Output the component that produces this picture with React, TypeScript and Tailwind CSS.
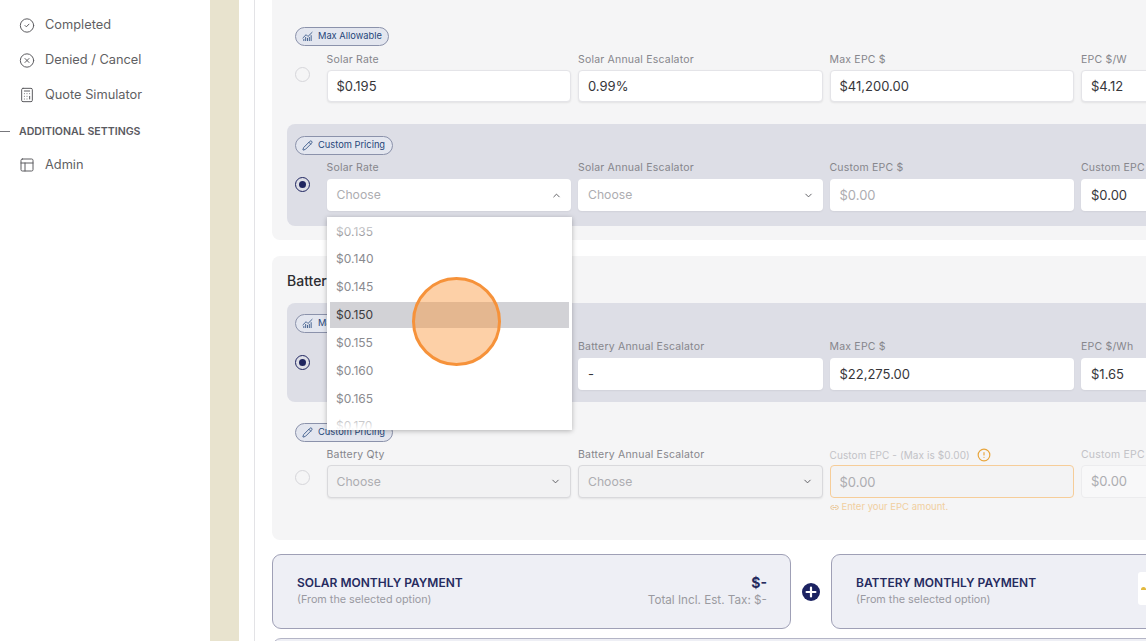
import React from "react";
import {
  CircleCheck,
  CircleX,
  Calculator,
  PanelsTopLeft,
  Pencil,
  ChartNoAxesCombined,
  ChevronDown,
  ChevronUp,
  CircleAlert,
  Link2,
} from "lucide-react";

const FONT = "font-['Inter','Noto_Sans',sans-serif]";

function NavItem({ icon, label }: { icon: React.ReactNode; label: string }) {
  return (
    <div className="flex h-[35px] items-center gap-[10px] pl-[19px] text-[12.8px] text-[#5f5f63]">
      <span className="flex w-[16px] justify-center text-[#5c5c60]">{icon}</span>
      <span>{label}</span>
    </div>
  );
}

function Badge({ kind }: { kind: "max" | "custom" }) {
  return (
    <div
      className={
        "flex h-[19px] items-center gap-[5px] rounded-full border border-[#8b92ab] bg-[#e3e6ef] pb-[1px] pl-[6px] text-[9.3px] text-[#27477a] " +
        (kind === "max" ? "w-[94px]" : "w-[98px]")
      }
    >
      {kind === "max" ? (
        <ChartNoAxesCombined size={11} strokeWidth={2} className="text-[#3b5a8a]" />
      ) : (
        <Pencil size={11} strokeWidth={2} className="text-[#3b5a8a]" />
      )}
      <span>{kind === "max" ? "Max Allowable" : "Custom Pricing"}</span>
    </div>
  );
}

function Radio({ on, className }: { on?: boolean; className: string }) {
  return (
    <div
      className={
        "flex h-[15px] w-[15px] shrink-0 items-center justify-center rounded-full border bg-transparent " +
        (on ? "border-[1.5px] border-[#1f2560] " : "border-[#d6d6da] ") +
        className
      }
    >
      {on && <div className="h-[7px] w-[7px] rounded-full bg-[#1f2560]" />}
    </div>
  );
}

type FieldProps = {
  label: React.ReactNode;
  value: string;
  placeholder?: boolean;
  select?: "up" | "down";
  variant?: "plain" | "borderless" | "disabled" | "warn" | "faint";
  labelClass?: string;
  inputClass?: string;
  children?: React.ReactNode;
};

function Field({
  label,
  value,
  placeholder,
  select,
  variant = "plain",
  labelClass = "mb-[6px] text-[#86868c]",
  inputClass = "h-[32px]",
  children,
}: FieldProps) {
  const box =
    variant === "plain"
      ? "border border-[#e4e4e8] bg-white pl-[9px] shadow-[0_1px_2px_rgba(0,0,0,0.08)]"
      : variant === "borderless"
        ? "bg-white pl-[10px] shadow-[0_1px_2px_rgba(0,0,0,0.06)]"
        : variant === "disabled"
          ? "border border-[#d9d9dc] bg-[#f2f2f3] pl-[9px] shadow-[0_1px_2px_rgba(0,0,0,0.08)]"
          : variant === "warn"
            ? "border border-[#f6cd99] bg-[#f3f3f4] pl-[9px]"
            : "border border-[#ececee] bg-[#f8f8f9] pl-[9px]";
  return (
    <div className="relative w-[244.5px] shrink-0">
      <div
        className={
          "h-[12px] whitespace-nowrap text-[10.5px] leading-[14px] tracking-[0.2px] " + labelClass
        }
      >
        {label}
      </div>
      <div
        className={
          "flex items-center justify-between rounded-[4px] pr-[9px] " +
          box +
          " " +
          inputClass +
          " " +
          (select ? "text-[12.2px] " : "text-[13px] ") +
          (placeholder ? "text-[#adadb1]" : "text-[#36363a]")
        }
      >
        <span className={variant === "plain" || variant === "warn" ? "pt-[2px]" : "pt-[1px]"}>{value}</span>
        {select === "up" && <ChevronUp size={11} className="text-[#55555a]" />}
        {select === "down" && <ChevronDown size={11} className="text-[#55555a]" />}
      </div>
      {children}
    </div>
  );
}

const OPTIONS = ["$0.135", "$0.140", "$0.145", "$0.150", "$0.155", "$0.160", "$0.165", "$0.170"];

function Menu() {
  return (
    <div className="absolute left-[0.5px] top-[56px] z-20 h-[213px] w-[244.5px] overflow-hidden bg-white px-[3px] pt-[1.5px] shadow-[0_1px_5px_rgba(0,0,0,0.28)]">
      <div className="flex flex-col gap-[1.85px]">
        {OPTIONS.map((o, i) => (
          <div
            key={o}
            className={
              "flex h-[26px] shrink-0 items-center pl-[6px] text-[12px] " +
              (i === 3 ? "bg-[#d2d2d6] text-[#3c3c40]" : "text-[#8a8a8f]")
            }
          >
            {o}
          </div>
        ))}
      </div>
      <div className="absolute inset-x-0 top-0 h-[22px] bg-gradient-to-b from-white to-transparent" />
      <div className="absolute inset-x-0 bottom-0 h-[18px] bg-gradient-to-t from-white to-transparent" />
    </div>
  );
}

function PayCard({
  title,
  width,
  right,
}: {
  title: string;
  width: string;
  right: React.ReactNode;
}) {
  return (
    <div
      className={
        "flex h-[75px] shrink-0 items-center justify-between rounded-[9px] border border-[#9fa0b6] bg-[#eeeff5] pl-[24px] pr-[23px] " +
        width
      }
    >
      <div>
        <div className="text-[12px] font-semibold leading-[16.5px] text-[#262b5f]">{title}</div>
        <div className="text-[10.8px] leading-[16.5px] text-[#9a9aa2]">(From the selected option)</div>
      </div>
      {right}
    </div>
  );
}

export default function App() {
  return (
    <div className={"relative flex h-[641px] w-[1146px] overflow-hidden bg-white " + FONT}>
      <aside className="w-[210px] shrink-0 bg-white pt-[7.5px]">
        <NavItem icon={<CircleCheck size={19} strokeWidth={1.5} />} label="Completed" />
        <NavItem icon={<CircleX size={19} strokeWidth={1.5} />} label="Denied / Cancel" />
        <NavItem icon={<Calculator size={20} strokeWidth={1.5} />} label="Quote Simulator" />
        <div className="mb-[-1.5px] mt-[2px] flex h-[34px] items-center text-[10.6px] font-semibold text-[#5a5a5f]">
          <div className="mr-[9px] h-[1px] w-[10px] bg-[#77777c]" />
          ADDITIONAL SETTINGS
        </div>
        <NavItem icon={<PanelsTopLeft size={20} strokeWidth={1.5} />} label="Admin" />
      </aside>
      <div className="w-[29px] shrink-0 bg-[#e8e3ce]" />
      <main className="min-w-0 flex-1 overflow-hidden">
        <div className="ml-[15px] flex h-full w-[1100px] flex-col border-l border-[#e3e3e6] pl-[17px]">
          {/* Solar options */}
          <section className="-mt-[20px] rounded-b-[8px] bg-[#f5f5f6] px-[15px] pb-[14px] pt-[35px]">
            <div className="px-[8px] pb-[15px] pt-[12px]">
              <Badge kind="max" />
              <div className="mt-[7px] flex">
                <Radio className="mt-[14px]" />
                <div className="ml-[16.5px] flex gap-[7px]">
                  <Field label="Solar Rate" value="$0.195" labelClass="mb-[5px] text-[#86868c]" />
                  <Field label="Solar Annual Escalator" value="0.99%" labelClass="mb-[5px] text-[#86868c]" />
                  <Field label="Max EPC $" value="$41,200.00" labelClass="mb-[5px] text-[#86868c]" />
                  <Field label="EPC $/W" value="$4.12" labelClass="mb-[5px] text-[#86868c]" />
                </div>
              </div>
            </div>
            <div className="mt-[7px] rounded-[8px] bg-[#dddee6] px-[8px] pb-[15px] pt-[12px]">
              <Badge kind="custom" />
              <div className="mt-[6px] flex">
                <Radio on className="mt-[16px]" />
                <div className="ml-[16.5px] flex gap-[7px]">
                  <Field label="Solar Rate" value="Choose" placeholder select="up" variant="borderless">
                    <Menu />
                  </Field>
                  <Field label="Solar Annual Escalator" value="Choose" placeholder select="down" variant="borderless" />
                  <Field label="Custom EPC $" value="$0.00" placeholder variant="borderless" />
                  <Field label="Custom EPC $/W" value="$0.00" variant="borderless" />
                </div>
              </div>
            </div>
          </section>

          {/* Battery options */}
          <section className="mt-[16px] h-[284px] shrink-0 rounded-[8px] bg-[#f5f5f6] px-[15px] pt-[16px]">
            <div className="h-[18px] text-[14px] font-medium leading-[18px] text-[#2c2c30]">Battery</div>
            <div className="mt-[13px] rounded-[8px] bg-[#dddee6] px-[8px] pb-[12px] pt-[11px]">
              <Badge kind="max" />
              <div className="mt-[7px] flex">
                <Radio on className="mt-[14.5px]" />
                <div className="ml-[16.5px] flex gap-[7px]">
                  <Field label="" value="" variant="borderless" />
                  <Field label="Battery Annual Escalator" value="-" variant="borderless" />
                  <Field label="Max EPC $" value="$22,275.00" variant="borderless" />
                  <Field label="EPC $/Wh" value="$1.65" variant="borderless" />
                </div>
              </div>
            </div>
            <div className="mt-[21px] px-[8px]">
              <Badge kind="custom" />
              <div className="mt-[6px] flex">
                <Radio className="mt-[21.5px]" />
                <div className="ml-[16.5px] flex gap-[7px]">
                  <Field label="Battery Qty" value="Choose" placeholder select="down" variant="disabled" labelClass="mb-[5px] text-[#86868c]" inputClass="h-[33px]" />
                  <Field label="Battery Annual Escalator" value="Choose" placeholder select="down" variant="disabled" labelClass="mb-[5px] text-[#86868c]" inputClass="h-[33px]" />
                  <Field
                    label={
                      <span className="flex items-center gap-[7px] text-[10px] tracking-[0.1px]">
                        Custom EPC - (Max is $0.00)
                        <CircleAlert size={14} className="text-[#e8a53c]" />
                      </span>
                    }
                    value="$0.00"
                    placeholder
                    variant="warn"
                    labelClass="mb-[5px] text-[#c2c2c6]"
                    inputClass="h-[33px]"
                  >
                    <div className="mt-[4px] flex items-center gap-[3px] text-[9.5px] leading-[10px] text-[#f1cfa0]">
                      <Link2 size={9} className="text-[#e6b677]" />
                      Enter your EPC amount.
                    </div>
                  </Field>
                  <Field label="Custom EPC $/Wh" value="$0.00" placeholder variant="faint" labelClass="mb-[5px] text-[#c2c2c6]" inputClass="h-[33px]" />
                </div>
              </div>
            </div>
          </section>

          {/* Payment cards */}
          <div className="mt-[14px] flex shrink-0 items-center">
            <PayCard
              title="SOLAR MONTHLY PAYMENT"
              width="w-[519px]"
              right={
                <div className="text-right">
                  <div className="text-[14px] font-bold leading-[18px] text-[#262b5f]">$-</div>
                  <div className="text-[11.7px] leading-[17px] text-[#9a9aa0]">Total Incl. Est. Tax: $-</div>
                </div>
              }
            />
            <div className="flex w-[40px] shrink-0 justify-center">
              <svg width="18" height="18" viewBox="0 0 18 18">
                <circle cx="9" cy="9" r="9" fill="#1c2362" />
                <path d="M9 4.6v8.8M4.6 9h8.8" stroke="#fff" strokeWidth="2.2" strokeLinecap="round" />
              </svg>
            </div>
            <PayCard title="BATTERY MONTHLY PAYMENT" width="w-[500px]" right={<div />} />
          </div>
          <div className="mt-[9px] h-[40px] w-[1000px] shrink-0 rounded-t-[9px] border border-[#b4b5c6] bg-[#eeeff5]" />
        </div>
      </main>

      {/* Small tool chip at the battery card's right edge */}
      <div className="absolute left-[1138px] top-[572px] flex h-[33px] w-[20px] items-center rounded-[3px] bg-white pl-[3px]">
        <div className="h-[3px] w-[5px] rounded-t-full bg-[#e2b93f]" />
      </div>

      {/* Pointer highlight */}
      <div className="pointer-events-none absolute left-[412px] top-[277px] z-30 h-[89px] w-[89px] rounded-full border-[3px] border-[#f6923a] bg-[rgba(250,150,60,0.45)]" />
    </div>
  );
}
